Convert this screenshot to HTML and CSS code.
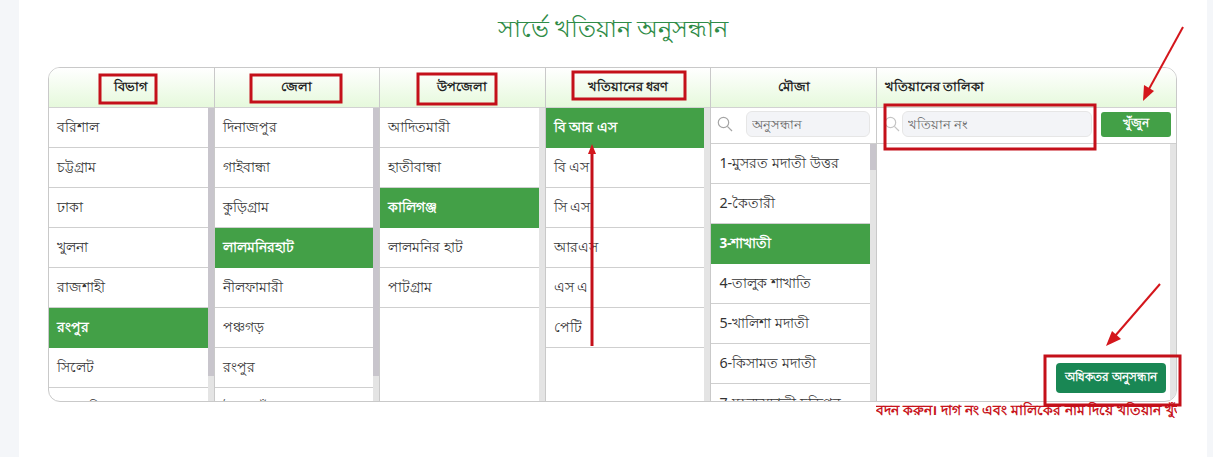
FILE: index.html
```html
<!DOCTYPE html>
<html lang="bn">
<head>
    <meta charset="UTF-8">
    <meta name="viewport" content="width=device-width, initial-scale=1.0">
    <title>সার্ভে খতিয়ান অনুসন্ধান</title>
    <link rel="stylesheet" href="styles.css">
</head>
<body>

    <div class="page">
        <h2 class="page-title">সার্ভে খতিয়ান অনুসন্ধান</h2>

        <div class="browser">
            <!-- বিভাগ -->
            <div class="column">
                <div class="column-head">বিভাগ</div>
                <div class="column-body">
                    <ul class="item-list">
                        <li>বরিশাল</li>
                        <li>চট্টগ্রাম</li>
                        <li>ঢাকা</li>
                        <li>খুলনা</li>
                        <li>রাজশাহী</li>
                        <li class="selected">রংপুর</li>
                        <li>সিলেট</li>
                        <li>ময়মনসিংহ</li>
                    </ul>
                    <div class="scrollbar"><div class="thumb thumb-long"></div></div>
                </div>
            </div>

            <!-- জেলা -->
            <div class="column">
                <div class="column-head">জেলা</div>
                <div class="column-body">
                    <ul class="item-list">
                        <li>দিনাজপুর</li>
                        <li>গাইবান্ধা</li>
                        <li>কুড়িগ্রাম</li>
                        <li class="selected">লালমনিরহাট</li>
                        <li>নীলফামারী</li>
                        <li>পঞ্চগড়</li>
                        <li>রংপুর</li>
                        <li>ঠাকুরগাঁও</li>
                    </ul>
                    <div class="scrollbar"><div class="thumb thumb-long"></div></div>
                </div>
            </div>

            <!-- উপজেলা -->
            <div class="column">
                <div class="column-head">উপজেলা</div>
                <div class="column-body">
                    <ul class="item-list">
                        <li>আদিতমারী</li>
                        <li>হাতীবান্ধা</li>
                        <li class="selected">কালিগঞ্জ</li>
                        <li>লালমনির হাট</li>
                        <li>পাটগ্রাম</li>
                    </ul>
                    <div class="scrollbar"></div>
                </div>
            </div>

            <!-- খতিয়ানের ধরণ -->
            <div class="column">
                <div class="column-head">খতিয়ানের ধরণ</div>
                <div class="column-body">
                    <ul class="item-list">
                        <li class="selected">বি আর এস</li>
                        <li>বি এস</li>
                        <li>সি এস</li>
                        <li>আরএস</li>
                        <li>এস এ</li>
                        <li>পেটি</li>
                    </ul>
                    <div class="scrollbar"></div>
                </div>
            </div>

            <!-- মৌজা -->
            <div class="column">
                <div class="column-head">মৌজা</div>
                <div class="search-row">
                    <svg class="search-icon" viewBox="0 0 16 16"><circle cx="6.5" cy="6.5" r="5.2"/><path d="M10.4 10.4 15 15"/></svg>
                    <input class="search-input mouza-input" type="text" placeholder="অনুসন্ধান">
                </div>
                <div class="column-body">
                    <ul class="item-list mouza-list">
                        <li>1-মুসরত মদাতী উত্তর</li>
                        <li>2-কৈতারী</li>
                        <li class="selected">3-শাখাতী</li>
                        <li>4-তালুক শাখাতি</li>
                        <li>5-খালিশা মদাতী</li>
                        <li>6-কিসামত মদাতী</li>
                        <li>7-মহনদমদাতী চন্ডিপুর</li>
                    </ul>
                    <div class="scrollbar"><div class="thumb thumb-short"></div></div>
                </div>
            </div>

            <!-- খতিয়ানের তালিকা -->
            <div class="column column-last">
                <div class="column-head head-left">খতিয়ানের তালিকা</div>
                <div class="search-row">
                    <svg class="search-icon icon-tight" viewBox="0 0 16 16"><circle cx="6.5" cy="6.5" r="5.2"/><path d="M10.4 10.4 15 15"/></svg>
                    <input class="search-input khatian-input" type="text" placeholder="খতিয়ান নং">
                    <button class="find-button">খুঁজুন</button>
                </div>
                <div class="column-body">
                    <div class="result-area">
                        <button class="more-button">অধিকতর অনুসন্ধান</button>
                    </div>
                    <div class="scrollbar"></div>
                </div>
            </div>
        </div>

        <div class="notice-wrap">
            <p class="notice">বদন করুন। দাগ নং এবং মালিকের নাম দিয়ে খতিয়ান খুঁজুন</p>
        </div>
    </div>

    <!-- লাল দাগ ও তীর -->
    <svg class="markup" viewBox="0 0 1213 457">
        <g class="markup-box">
            <rect x="100" y="75" width="56" height="28"/>
            <rect x="251" y="75" width="90" height="27"/>
            <rect x="418" y="74" width="78" height="30"/>
            <rect x="573" y="72" width="112" height="27"/>
            <rect x="885" y="105" width="210" height="44"/>
            <rect x="1045" y="356" width="135" height="49"/>
        </g>
        <path class="markup-line" d="M592 346V152"/>
        <path class="markup-head" d="M592 144l-4 10h8z"/>
        <path class="markup-line thin" d="M1183 27 1149 89"/>
        <path class="markup-head" d="M1143 101l1-16 10 6z"/>
        <path class="markup-line thin" d="M1160 284 1115 336"/>
        <path class="markup-head" d="M1106 346l6-15 9 8z"/>
    </svg>

</body>
</html>
```

FILE: styles.css
```css
/* ページ全体 */
body {
    margin: 0;
    height: 457px;
    overflow: hidden;
    background-color: #f4f6f9;
    font-family: "Noto Sans", "Liberation Sans", sans-serif;
    color: #222;
}

.page {
    margin-left: 19px;
    width: 1188px;
    height: 457px;
    padding: 0 29px;
    box-sizing: border-box;
    background-color: #ffffff;
}

.page-title {
    margin: 0;
    padding-top: 9px;
    height: 67px;
    box-sizing: border-box;
    text-align: center;
    font-size: 23.7px;
    font-weight: 400;
    line-height: 38px;
    color: #2e8b46;
}

/* 6列のパネル */
.browser {
    display: grid;
    grid-template-columns: repeat(5, 165.6px) 1fr;
    width: 1129px;
    height: 335px;
    box-sizing: border-box;
    border: 1px solid #c9c9c9;
    border-radius: 12px;
    overflow: hidden;
}

.column {
    display: flex;
    flex-direction: column;
    min-width: 0;
    height: 333px;
    border-right: 1px solid #c9c9c9;
    box-sizing: border-box;
}

.column-last {
    border-right: none;
}

.column-head {
    flex: none;
    height: 40px;
    display: flex;
    align-items: center;
    justify-content: center;
    box-sizing: border-box;
    border-bottom: 1px solid #d2d2d2;
    background: linear-gradient(#ffffff, #e6f9dc);
    font-size: 12.5px;
    font-weight: 700;
    color: #222;
}

.head-left {
    justify-content: flex-start;
    padding-left: 8px;
}

.column-body {
    flex: 1;
    min-height: 0;
    display: flex;
}

.item-list {
    flex: 1;
    min-width: 0;
    margin: 0;
    padding: 0;
    list-style: none;
    overflow: hidden;
}

.item-list li {
    height: 40px;
    box-sizing: border-box;
    padding-left: 8px;
    border-bottom: 1px solid #cfcfcf;
    font-size: 13.8px;
    line-height: 38px;
    color: #333;
    white-space: nowrap;
}

.item-list li.selected {
    background-color: #43a047;
    border-bottom-color: #43a047;
    font-size: 13.5px;
    font-weight: 700;
    color: #ffffff;
}

.mouza-list li {
    font-size: 14.3px;
}

/* スクロールバー */
.scrollbar {
    flex: none;
    width: 6px;
    background-color: #e4e4e4;
}

.thumb {
    background-color: #c8c5cc;
}

.thumb-long {
    height: 268px;
}

.thumb-short {
    height: 26px;
}

/* 検索行 */
.search-row {
    flex: none;
    height: 36px;
    display: flex;
    align-items: center;
    box-sizing: border-box;
    border-bottom: 1px solid #cfcfcf;
    padding: 0 0 3px 6px;
}

.search-icon {
    flex: none;
    width: 16px;
    height: 16px;
    fill: none;
    stroke: #a5a5a5;
    stroke-width: 1.2;
}

.search-input {
    height: 26px;
    box-sizing: border-box;
    padding: 0 5px;
    border: 1px solid #e6e6e6;
    border-radius: 6px;
    background-color: #f3f4f7;
    font-family: inherit;
    font-size: 12.5px;
    color: #555;
}

.search-input::placeholder {
    color: #666;
    opacity: 1;
}

.mouza-input {
    width: 124px;
    margin-left: 13px;
}

.icon-tight {
    margin-right: -4px;
    margin-left: 1px;
    stroke: #c5c5c5;
}

.khatian-input {
    width: 190px;
    margin-left: 6px;
}

.find-button {
    width: 70px;
    height: 25px;
    margin-left: 9px;
    padding: 0;
    border: none;
    border-radius: 3px;
    background-color: #43a047;
    font-family: inherit;
    font-size: 12px;
    font-weight: 700;
    color: #ffffff;
}

/* 結果エリア */
.result-area {
    flex: 1;
    display: flex;
    justify-content: flex-end;
    align-items: flex-end;
    padding: 0 4px 8px 0;
}

.more-button {
    width: 110px;
    height: 30px;
    padding: 0;
    border: none;
    border-radius: 4px;
    background-color: #198754;
    font-family: inherit;
    font-size: 11.5px;
    font-weight: 700;
    color: #ffffff;
    white-space: nowrap;
}

/* 流れる注意書き */
.notice-wrap {
    width: 301px;
    margin-left: 828px;
    overflow: hidden;
}

.notice {
    margin: 0;
    font-size: 14.1px;
    font-weight: 700;
    line-height: 16px;
    color: #c8141c;
    white-space: nowrap;
}

/* 注釈 */
.markup {
    position: absolute;
    top: 0;
    left: 0;
    width: 1213px;
    height: 457px;
    pointer-events: none;
}

.markup-box rect {
    fill: none;
    stroke: #c4101a;
    stroke-width: 3;
}

.markup-line {
    fill: none;
    stroke: #c4101a;
    stroke-width: 3;
}

.markup-line.thin {
    stroke: #d4161c;
    stroke-width: 2;
}

.markup-head {
    fill: #d4161c;
}
```
